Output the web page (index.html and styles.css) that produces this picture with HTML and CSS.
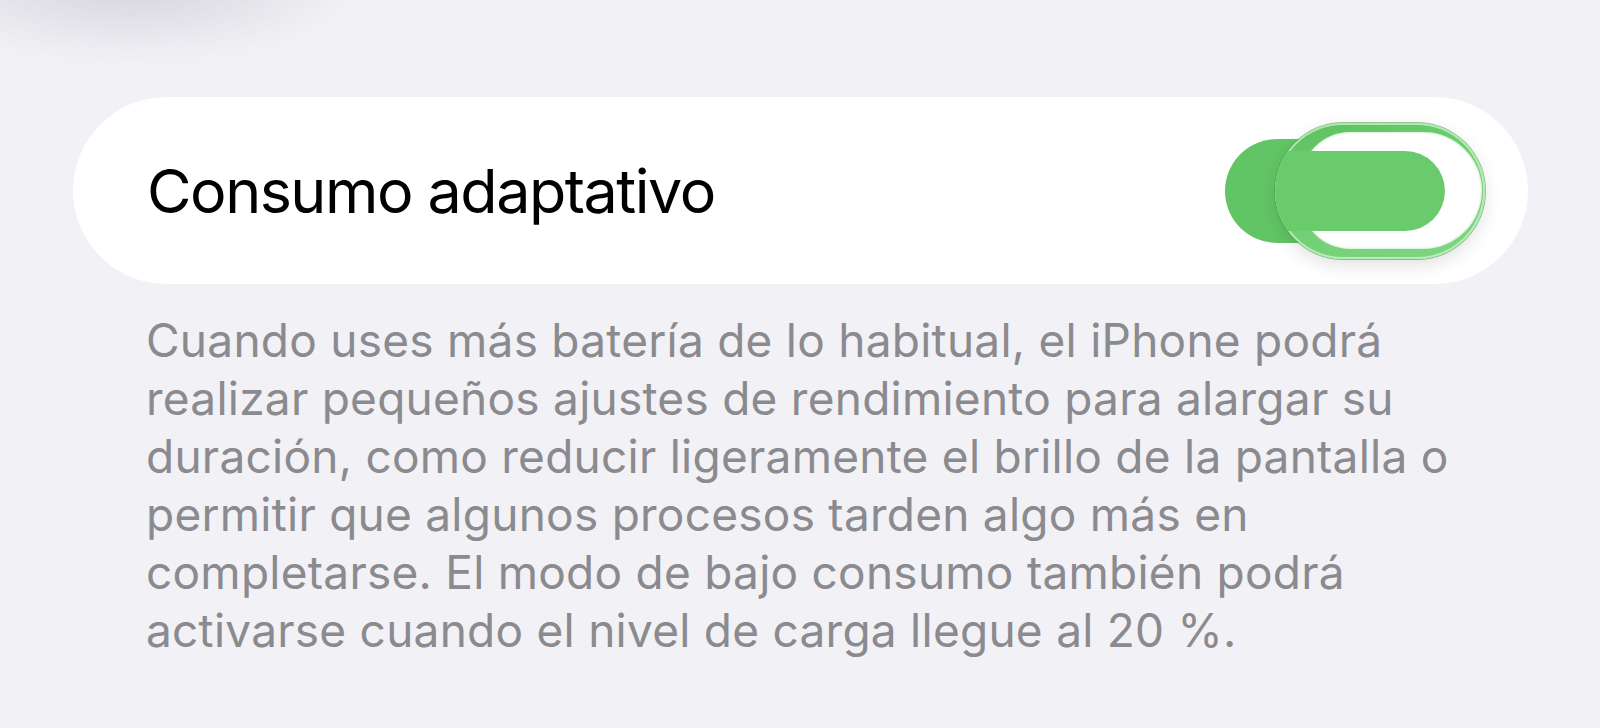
FILE: index.html
```html
<html lang="es">
<head>
    <meta charset="UTF-8">
    <meta name="viewport" content="width=device-width, initial-scale=1.0">
    <title>Batería</title>
    <link rel="stylesheet" href="styles.css">
</head>
<body>
    <div class="haze"></div>
    <div class="settings">
        <div class="cell">
            <span class="cell-label">Consumo adaptativo</span>
            <div class="switch" role="switch" aria-checked="true">
                <div class="switch-track"></div>
                <div class="switch-knob">
                    <div class="knob-glass"></div>
                    <div class="knob-fill"></div>
                </div>
            </div>
        </div>
        <p class="footer">Cuando uses más batería de lo habitual, el iPhone podrá realizar pequeños ajustes de rendimiento para alargar su duración, como reducir ligeramente el brillo de la pantalla o permitir que algunos procesos tarden algo más en completarse. El modo de bajo consumo también podrá activarse cuando el nivel de carga llegue al 20&nbsp;%.</p>
    </div>
</body>
</html>
```

FILE: styles.css
```css
:root {
    --grouped-bg: #f1f1f6;
    --label: #000000;
    --secondary: #8a8a8f;
    --green: #62c565;
    --green-light: #6acb6d;
}

body {
    margin: 0;
    height: 728px;
    overflow: hidden;
    background: var(--grouped-bg);
    font-family: "Inter", "Noto Sans", sans-serif;
    position: relative;
}

/* blurred shadow of the row above */
.haze {
    position: absolute;
    left: -60px;
    top: -70px;
    width: 420px;
    height: 130px;
    border-radius: 50%;
    background: radial-gradient(ellipse at 45% 40%, rgba(200, 200, 208, 0.75), rgba(230, 230, 236, 0) 70%);
    filter: blur(10px);
}

.settings {
    position: relative;
    padding: 97px 72px 0 73px;
}

.cell {
    height: 187px;
    border-radius: 94px;
    background: #ffffff;
    display: flex;
    align-items: center;
    justify-content: space-between;
    padding: 0 43px 0 74px;
}

.cell-label {
    font-size: 61px;
    color: var(--label);
    letter-spacing: -1.5px;
}

.switch {
    position: relative;
    width: 260px;
    height: 136px;
}

.switch-track {
    position: absolute;
    left: 0;
    top: 16px;
    width: 230px;
    height: 104px;
    border-radius: 52px;
    background: var(--green);
}

.switch-knob {
    position: absolute;
    right: 0;
    top: 0;
    width: 210px;
    height: 136px;
    border-radius: 68px;
    overflow: hidden;
    background: linear-gradient(160deg, #5dbf60 0%, #6fce72 45%, #7fd682 100%);
    box-shadow: 0 6px 18px rgba(0, 0, 0, 0.12), 0 0 0 1px rgba(72, 170, 76, 0.6), inset 0 0 0 2px rgba(210, 245, 210, 0.7);
}

.knob-glass {
    position: absolute;
    left: 26px;
    right: 3px;
    top: 9px;
    bottom: 10px;
    border-radius: 50px 60px 60px 50px;
    background: #ffffff;
    box-shadow: inset 0 0 3px rgba(90, 190, 95, 0.5);
}

.knob-fill {
    position: absolute;
    left: -30px;
    right: 40px;
    top: 28px;
    bottom: 28px;
    border-radius: 40px;
    background: var(--green-light);
}

.footer {
    margin: 27px 0 0 73px;
    max-width: 1320px;
    font-size: 46px;
    line-height: 58px;
    color: var(--secondary);
    letter-spacing: 0.25px;
}
```
